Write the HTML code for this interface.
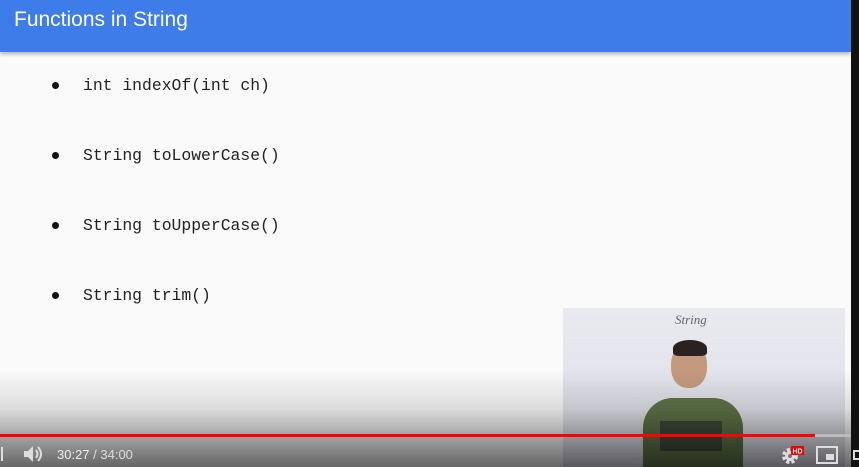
<!DOCTYPE html>
<html><head><style>
*{margin:0;padding:0;box-sizing:border-box}
body{width:859px;height:467px;overflow:hidden;background:#fafafa;position:relative;font-family:"Liberation Sans",sans-serif}
.hdr{position:absolute;left:0;top:0;width:851px;height:52px;background:#3d7ce9;box-shadow:0 2px 4px rgba(0,0,0,.3)}
.hdr span{position:absolute;left:14px;top:8px;color:#fff;font-size:21px}
.blk{position:absolute;right:0;top:0;width:8px;height:467px;background:#111}
.li{position:absolute;left:83px;font-family:"Liberation Mono",monospace;font-size:16.4px;color:#222}
.dot{position:absolute;left:52px;width:7px;height:7px;border-radius:50%;background:#111}
.pip{position:absolute;left:563px;top:308px;width:282px;height:159px;background:linear-gradient(#e9eaf0,#dcdde6)}
.grad{position:absolute;left:0;top:370px;width:851px;height:97px;background:linear-gradient(rgba(0,0,0,0),rgba(0,0,0,.12) 40%,rgba(0,0,0,.6))}
.bar{position:absolute;left:0;top:434px;width:815px;height:3px;background:#f00}
.bar2{position:absolute;left:815px;top:434px;width:36px;height:3px;background:#bbb}
.t{position:absolute;left:57px;top:447px;color:#ddd;font-size:13px}
</style></head><body>
<div class="hdr"><span>Functions in String</span></div>
<div class="dot" style="top:82px"></div><div class="li" style="top:76px">int indexOf(int ch)</div>
<div class="dot" style="top:152px"></div><div class="li" style="top:146px">String toLowerCase()</div>
<div class="dot" style="top:222px"></div><div class="li" style="top:216px">String toUpperCase()</div>
<div class="dot" style="top:292px"></div><div class="li" style="top:286px">String trim()</div>
<div class="pip">
<div style="position:absolute;left:112px;top:4px;font-size:13px;color:#666;font-family:'Liberation Serif',serif;font-style:italic">String</div>
<div style="position:absolute;left:108px;top:36px;width:36px;height:44px;border-radius:45%;background:#c49a7e"></div>
<div style="position:absolute;left:110px;top:32px;width:34px;height:16px;border-radius:50% 50% 20% 20%;background:#2a2220"></div>
<div style="position:absolute;left:80px;top:90px;width:100px;height:69px;border-radius:30px 30px 0 0;background:#5f7447"></div>
<div style="position:absolute;left:97px;top:113px;width:62px;height:30px;background:#3f4a38"></div>
</div>
<div class="grad"></div>
<div class="bar"></div><div class="bar2"></div>
<div style="position:absolute;left:1px;top:447px;width:2px;height:14px;background:#ddd"></div>
<svg style="position:absolute;left:23px;top:445px" width="22" height="18" viewBox="0 0 22 18"><path d="M1 6h4l5-5v16l-5-5H1z" fill="#ddd"/><path d="M13 5q3 4 0 8M15 2q6 7 0 14" stroke="#ddd" stroke-width="2" fill="none"/></svg>
<div class="t"><b style="font-weight:normal;color:#eee">30:27</b> / 34:00</div>
<svg style="position:absolute;left:781px;top:446px" width="24" height="18" viewBox="0 0 24 18"><circle cx="9" cy="10" r="6" fill="none" stroke="#ddd" stroke-width="4" stroke-dasharray="3 2"/><circle cx="9" cy="10" r="5" fill="#ddd"/><circle cx="9" cy="10" r="2" fill="#777"/><rect x="10" y="0" width="13" height="9" fill="#e00"/><text x="11.5" y="7.5" font-size="7" font-weight="bold" fill="#fff" font-family="Liberation Sans">HD</text></svg>
<svg style="position:absolute;left:816px;top:446px" width="22" height="18"><rect x="1" y="1" width="20" height="16" fill="none" stroke="#ddd" stroke-width="2"/><rect x="10" y="8" width="8" height="6" fill="#ddd"/></svg>
<div class="blk"></div>
<div style="position:absolute;left:853px;top:450px;width:6px;height:10px;border:2px solid #ddd;border-right:none"></div>
</body></html>
